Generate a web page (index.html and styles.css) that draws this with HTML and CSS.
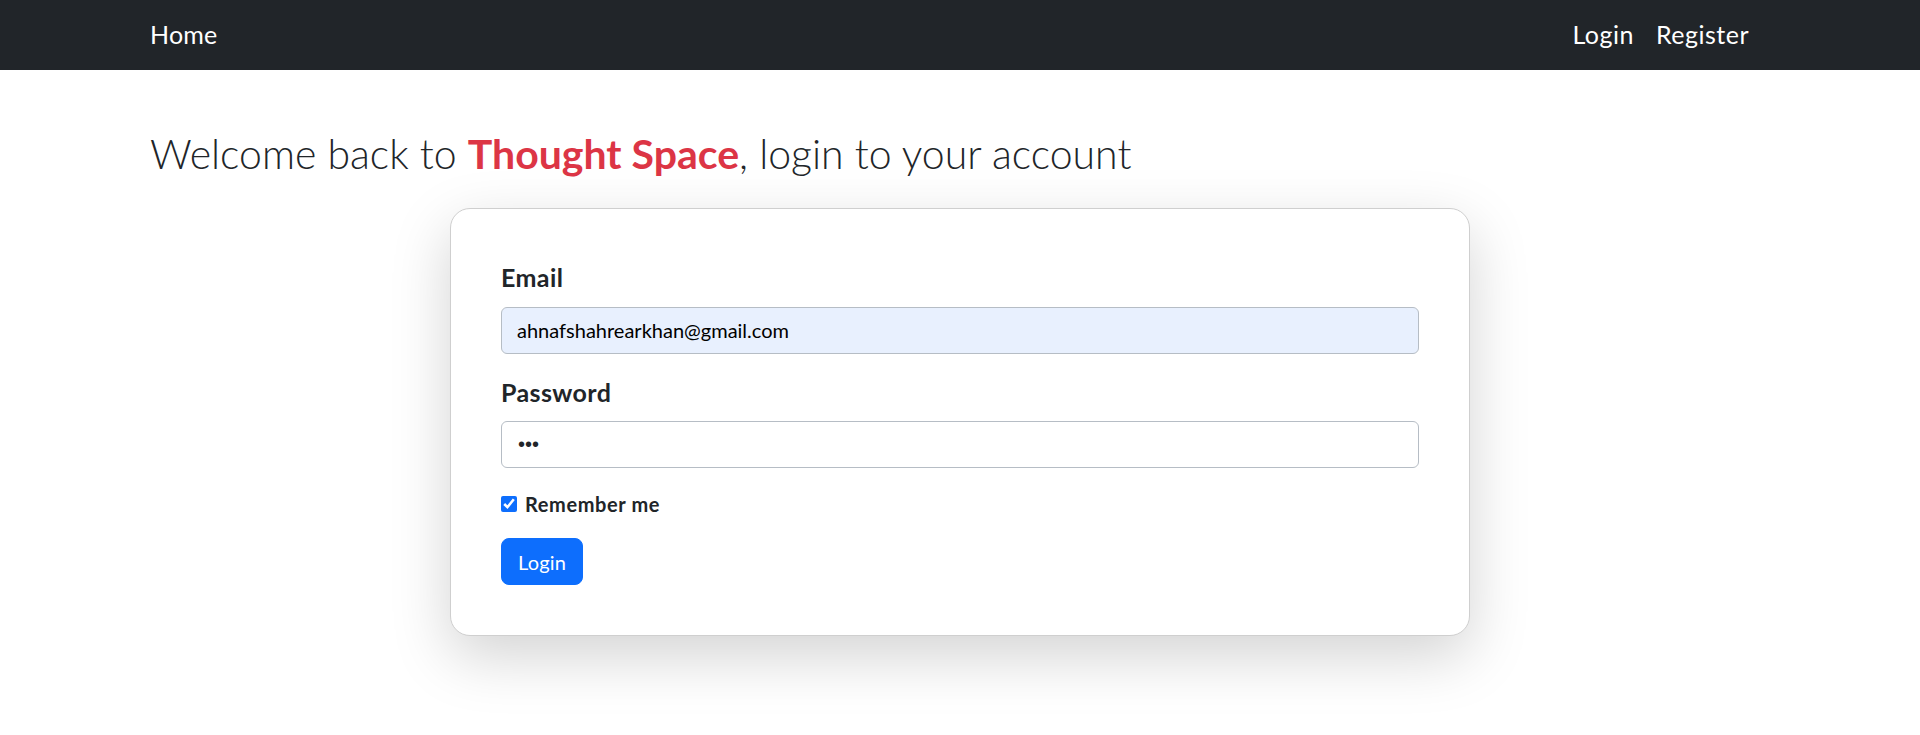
FILE: index.html
```html
<!DOCTYPE html>
<html lang="en">
<head>
<meta charset="utf-8">
<title>Login - Thought Space</title>
<link rel="stylesheet" href="styles.css">
</head>
<body>
<nav class="navbar">
  <div class="container nav-inner">
    <a class="brand" href="#">Home</a>
    <ul class="nav-links">
      <li><a class="nav-link" href="#">Login</a></li>
      <li><a class="nav-link" href="#">Register</a></li>
    </ul>
  </div>
</nav>
<main class="container page">
  <h2 class="welcome">Welcome back to <span class="brand-name">Thought Space</span>, login to your account</h2>
  <form class="login-card">
    <div class="field">
      <label class="field-label" for="email">Email</label>
      <input class="text-input autofilled" id="email" type="email" value="ahnafshahrearkhan@gmail.com">
    </div>
    <div class="field">
      <label class="field-label" for="password">Password</label>
      <input class="text-input password" id="password" type="password" value="123">
    </div>
    <div class="check-row">
      <input class="check" id="remember" type="checkbox" checked>
      <label class="check-label" for="remember">Remember me</label>
    </div>
    <button class="btn-primary" type="button">Login</button>
  </form>
</main>
</body>
</html>
```
FILE: styles.css
```css
* { box-sizing: border-box; }

html, body {
  margin: 0;
  padding: 0;
  background: #ffffff;
  color: #212529;
  font-family: "Lato", "Open Sans", sans-serif;
}

.container {
  width: 1620px;
  margin: 0 auto;
}

.page {
  padding-bottom: 120px;
}

.navbar {
  background: #212529;
  height: 70px;
  display: flex;
  align-items: center;
}

.nav-inner {
  display: flex;
  align-items: center;
}

.brand {
  color: #ffffff;
  text-decoration: none;
  font-size: 25px;
  line-height: 37.5px;
  padding: 6.25px 0;
  letter-spacing: 0.2px;
}

.nav-links {
  list-style: none;
  margin: 0 0 0 auto;
  padding: 0 10px 0 0;
  display: flex;
}

.nav-link {
  display: block;
  color: #ffffff;
  text-decoration: none;
  font-size: 25px;
  line-height: 37.5px;
  padding: 0 11px;
  letter-spacing: 0.5px;
}

.welcome {
  margin: 60px 0 30px 0;
  font-size: 41px;
  line-height: 48px;
  font-weight: 300;
  color: #212529;
}

.brand-name {
  color: #dc3545;
  font-weight: 700;
}

.login-card {
  width: 1020px;
  margin: 0 auto;
  background: #ffffff;
  border: 1px solid #cfcfcf;
  border-radius: 20px;
  padding: 50px;
  box-shadow: 0 20px 60px rgba(0, 0, 0, 0.175);
}

.field {
  margin-bottom: 20px;
}

.field-label {
  display: block;
  font-size: 25px;
  line-height: 37.5px;
  font-weight: 700;
  letter-spacing: 0.4px;
  margin-bottom: 10px;
}

.text-input {
  display: block;
  width: 100%;
  height: 47px;
  font-family: inherit;
  font-size: 20px;
  line-height: 30px;
  padding: 7.5px 15px;
  color: #212529;
  background: #ffffff;
  border: 1px solid #b6bdc5;
  border-radius: 6px;
  outline: none;
}

.password {
  font-family: "Liberation Sans", Arial, sans-serif;
  padding-left: 16px;
}

.autofilled {
  background: #e8f0fe;
  color: #000000;
}

.check-row {
  display: flex;
  align-items: center;
  gap: 8px;
  margin-bottom: 20px;
  height: 30px;
  padding-top: 2px;
}

.check {
  width: 16px;
  height: 16px;
  margin: 0;
  accent-color: #0d6efd;
}

.check-label {
  font-size: 20px;
  line-height: 30px;
  font-weight: 700;
  letter-spacing: 0.6px;
}

.btn-primary {
  display: block;
  font-family: inherit;
  font-size: 20px;
  line-height: 30px;
  padding: 7.5px 16px;
  height: 47px;
  color: #ffffff;
  background: #0d6efd;
  border: 1px solid #0d6efd;
  border-radius: 8px;
  letter-spacing: 0.2px;
}
```
